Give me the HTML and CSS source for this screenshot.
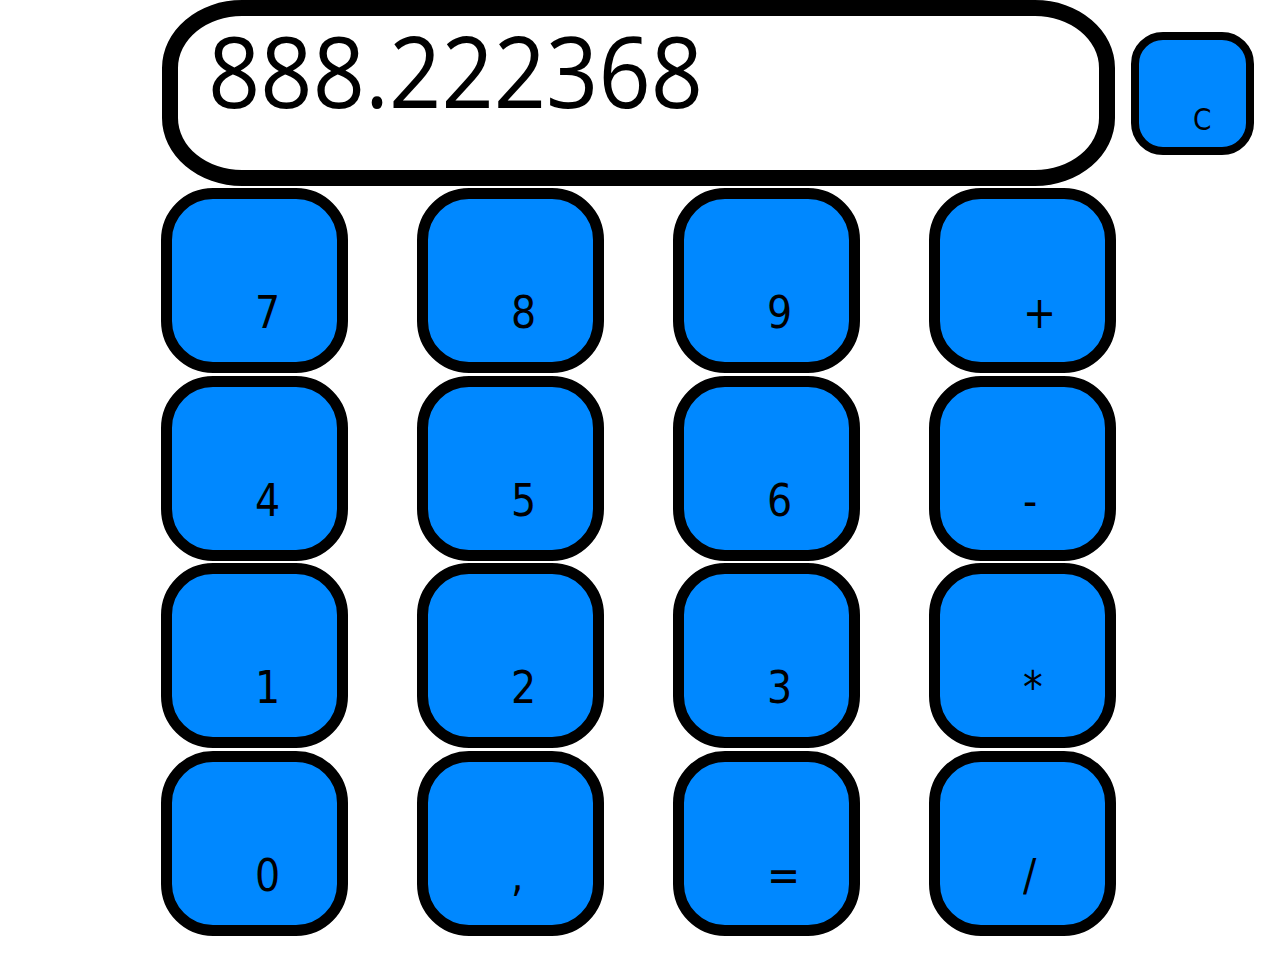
FILE: index.html
```html
<!DOCTYPE html>
<html>
<head>
<meta charset="utf-8">
<title>Calculator</title>
<link rel="stylesheet" href="styles.css">
</head>
<body>
<div class="calc">
  <div class="top">
    <div class="display"><span class="value">888.222368</span></div>
    <div class="key key-clear"><span class="label">C</span></div>
  </div>
  <div class="pad">
    <div class="key"><span class="label">7</span></div>
    <div class="key"><span class="label">8</span></div>
    <div class="key"><span class="label">9</span></div>
    <div class="key"><span class="label">+</span></div>
    <div class="key"><span class="label">4</span></div>
    <div class="key"><span class="label">5</span></div>
    <div class="key"><span class="label">6</span></div>
    <div class="key"><span class="label">-</span></div>
    <div class="key"><span class="label">1</span></div>
    <div class="key"><span class="label">2</span></div>
    <div class="key"><span class="label">3</span></div>
    <div class="key"><span class="label">*</span></div>
    <div class="key"><span class="label">0</span></div>
    <div class="key"><span class="label">,</span></div>
    <div class="key"><span class="label">=</span></div>
    <div class="key"><span class="label">/</span></div>
  </div>
</div>
</body>
</html>
```

FILE: styles.css
```css
html, body {
  margin: 0;
  padding: 0;
  background: #ffffff;
}

body {
  width: 1276px;
  height: 960px;
  overflow: hidden;
  font-family: "DejaVu Sans", Verdana, sans-serif;
  color: #000;
}

.calc {
  padding-left: 161px;
}

.top {
  display: flex;
  align-items: flex-start;
  height: 188px;
}

.display {
  box-sizing: border-box;
  width: 953px;
  height: 186px;
  margin-left: 1px;
  border: 16px solid #000;
  border-radius: 80px / 68px;
  background: #fff;
  padding: 4px 0 0 30px;
  overflow: hidden;
}

.value {
  display: inline-block;
  font-family: "Open Sans", "Liberation Sans", sans-serif;
  font-size: 99.5px;
  line-height: 1;
  transform: scaleX(0.92);
  transform-origin: left top;
  white-space: nowrap;
}

.pad {
  display: grid;
  grid-template-columns: repeat(4, 187px);
  grid-auto-rows: 185px;
  column-gap: 69px;
  row-gap: 2.5px;
}

.key {
  box-sizing: border-box;
  border: 11px solid #000;
  border-radius: 52px;
  background: #0088ff;
  padding-top: 91px;
  padding-left: 83px;
}

.label {
  display: block;
  font-size: 45px;
  line-height: 45px;
  white-space: nowrap;
  transform: scaleX(0.88);
  transform-origin: left top;
}

.key-clear {
  width: 123px;
  height: 123px;
  margin-left: 16px;
  margin-top: 32px;
  border-width: 8px;
  border-radius: 32px;
  padding-top: 65px;
  padding-left: 54px;
}

.key-clear .label {
  font-size: 30px;
  line-height: 30px;
}
```
